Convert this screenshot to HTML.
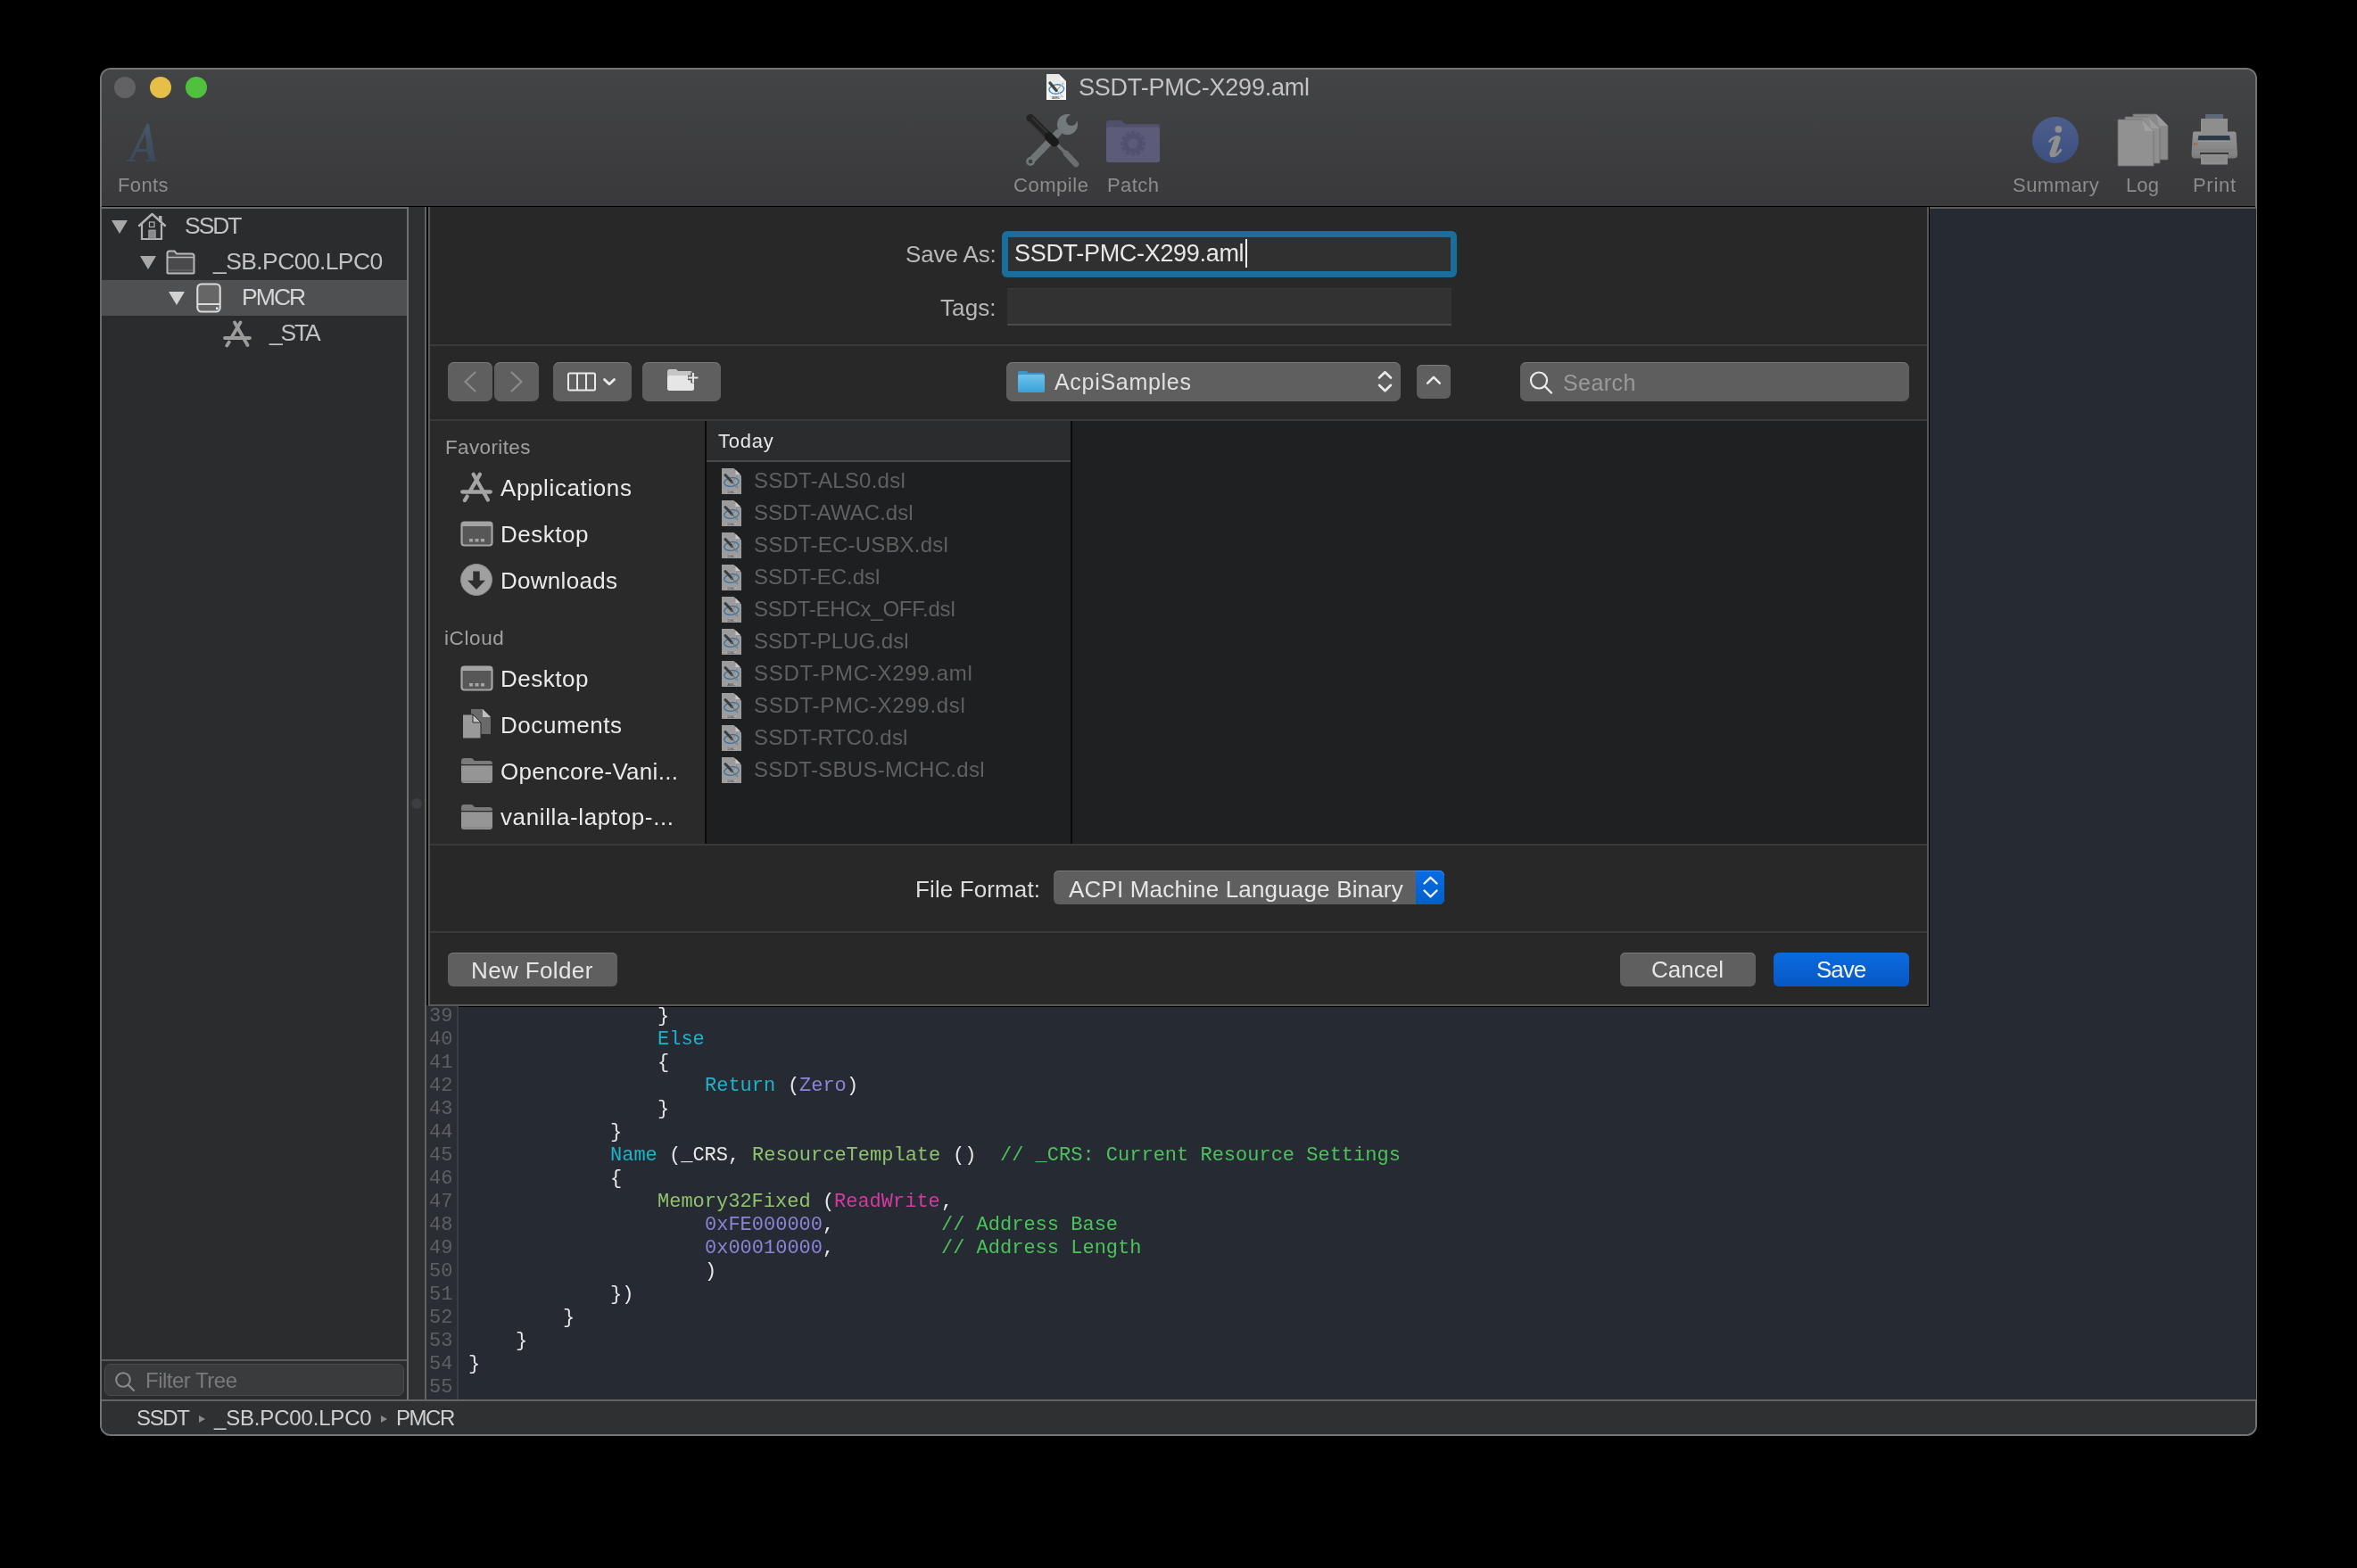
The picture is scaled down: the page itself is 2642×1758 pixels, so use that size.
<!DOCTYPE html>
<html><head><meta charset="utf-8">
<style>
*{margin:0;padding:0;box-sizing:border-box}
html,body{width:2642px;height:1758px;background:#000;overflow:hidden;font-family:"Liberation Sans",sans-serif}
.a{position:absolute}
.t{position:absolute;white-space:nowrap;line-height:1;will-change:transform}
.m{position:absolute;white-space:pre;line-height:1;will-change:transform;font-family:"Liberation Mono",monospace;font-size:22px;color:#e8e8e8}
svg{overflow:visible}
</style></head><body>
<div class="a" style="left:112px;top:76px;width:2418px;height:1534px;border:2px solid #747474;border-radius:12px;background:#2b2c2e;overflow:hidden"><div class="a" style="left:0;top:0;width:2416px;height:154px;background:linear-gradient(#434446,#39393b);border-bottom:1px solid #000"></div><div class="a" style="left:0;top:1491px;width:2416px;height:42px;background:#2f3032;border-top:2px solid #646464"></div></div>
<div class="a" style="left:113px;top:232px;width:343px;height:1337px;background:#2b2c2e;"></div>
<div class="a" style="left:456px;top:232px;width:2px;height:1337px;background:#6f6f6f;"></div>
<div class="a" style="left:458px;top:232px;width:18px;height:1337px;background:#2f3032;"></div>
<div class="a" style="left:461px;top:895px;width:12px;height:12px;border-radius:6px;background:#3d3e41"></div>
<div class="a" style="left:476px;top:232px;width:2053px;height:1337px;background:#262a33;"></div>
<div class="a" style="left:476px;top:232px;width:2px;height:1337px;background:#616264;"></div>
<div class="a" style="left:478px;top:232px;width:2051px;height:2px;background:#5c5c5c;"></div>
<div class="a" style="left:478px;top:232px;width:4px;height:895px;background:#0a0a0a;"></div>
<div class="a" style="left:480px;top:232px;width:2px;height:896px;background:#575757;"></div>
<div class="a" style="left:482px;top:232px;width:1678px;height:894px;background:#282828;"></div>
<div class="a" style="left:480px;top:1126px;width:1682px;height:2px;background:#575757;"></div>
<div class="a" style="left:2160px;top:232px;width:2px;height:896px;background:#575757;"></div>
<div class="a" style="left:2162px;top:232px;width:1px;height:897px;background:#000;"></div>
<div class="a" style="left:478px;top:1128px;width:1685px;height:1px;background:#000;"></div>
<div class="a" style="left:128px;top:86px;width:24px;height:24px;border-radius:12px;background:#626264"></div>
<div class="a" style="left:168px;top:86px;width:24px;height:24px;border-radius:12px;background:#e6bf48"></div>
<div class="a" style="left:208px;top:86px;width:24px;height:24px;border-radius:12px;background:#4fc13e"></div>
<div class="t" style="left:1209.00px;top:85.34px;font-size:27px;color:#c4c4c4;letter-spacing:-0.219px;">SSDT-PMC-X299.aml</div>
<div class="t" style="left:132.00px;top:197.08px;font-size:22px;color:#8c8c8c;letter-spacing:0.400px;">Fonts</div>
<div class="t" style="left:1136.00px;top:197.08px;font-size:22px;color:#8c8c8c;letter-spacing:0.542px;">Compile</div>
<div class="t" style="left:1241.00px;top:197.08px;font-size:22px;color:#8c8c8c;letter-spacing:0.438px;">Patch</div>
<div class="t" style="left:2256.00px;top:197.08px;font-size:22px;color:#8c8c8c;letter-spacing:0.458px;">Summary</div>
<div class="t" style="left:2383.00px;top:197.08px;font-size:22px;color:#8c8c8c;letter-spacing:0.125px;">Log</div>
<div class="t" style="left:2458.00px;top:197.08px;font-size:22px;color:#8c8c8c;letter-spacing:0.688px;">Print</div>
<div class="t" style="left:207.00px;top:240.17px;font-size:26.5px;color:#c2c2c2;letter-spacing:-2.050px;">SSDT</div>
<div class="t" style="left:238.50px;top:280.27px;font-size:26.5px;color:#c2c2c2;letter-spacing:-0.600px;">_SB.PC00.LPC0</div>
<div class="a" style="left:113px;top:314px;width:343px;height:40px;background:#4f5052;"></div>
<div class="t" style="left:270.80px;top:319.57px;font-size:26.5px;color:#d6d6d6;letter-spacing:-1.933px;">PMCR</div>
<div class="t" style="left:302.20px;top:359.77px;font-size:26.5px;color:#c2c2c2;letter-spacing:-2.233px;">_STA</div>
<div class="t" style="left:1015.00px;top:272.19px;font-size:26px;color:#b8b8b8;letter-spacing:-0.114px;">Save As:</div>
<div class="t" style="left:1054.00px;top:332.19px;font-size:26px;color:#b8b8b8;letter-spacing:0.113px;">Tags:</div>
<div class="a" style="left:1123px;top:259px;width:510px;height:52px;border-radius:6px;background:#1a6e9b"></div>
<div class="a" style="left:1130px;top:266px;width:496px;height:38px;background:#303030;"></div>
<div class="t" style="left:1136.80px;top:271.34px;font-size:27px;color:#e8e8e8;letter-spacing:-0.312px;">SSDT-PMC-X299.aml</div>
<div class="a" style="left:1396px;top:268px;width:2px;height:32px;background:#f0f0f0;"></div>
<div class="a" style="left:1129px;top:323px;width:498px;height:42px;background:#323232;border-bottom:2px solid #4a4a4a;border-top:1px solid #3a3a3a"></div>
<div class="a" style="left:482px;top:386px;width:1678px;height:2px;background:#3a3a3a;"></div>
<div class="a" style="left:482px;top:470px;width:1678px;height:2px;background:#3a3a3a;"></div>
<div class="a" style="left:502px;top:406px;width:50px;height:44px;background:#5f5f5f;border-radius:7px;box-shadow:inset 0 1px 0 #7a7a7a"></div>
<div class="a" style="left:554px;top:406px;width:50px;height:44px;background:#5f5f5f;border-radius:7px;box-shadow:inset 0 1px 0 #7a7a7a"></div>
<div class="a" style="left:620px;top:406px;width:88px;height:44px;background:#5f5f5f;border-radius:7px;box-shadow:inset 0 1px 0 #7a7a7a"></div>
<div class="a" style="left:720px;top:406px;width:88px;height:44px;background:#5f5f5f;border-radius:7px;box-shadow:inset 0 1px 0 #7a7a7a"></div>
<div class="a" style="left:1128px;top:406px;width:442px;height:44px;background:#5f5f5f;border-radius:7px;box-shadow:inset 0 1px 0 #7a7a7a"></div>
<div class="a" style="left:1588px;top:409px;width:38px;height:38px;background:#5f5f5f;border-radius:6px;box-shadow:inset 0 1px 0 #7a7a7a"></div>
<div class="t" style="left:1182.00px;top:416.04px;font-size:25px;color:#e0e0e0;letter-spacing:0.700px;">AcpiSamples</div>
<div class="a" style="left:1704px;top:406px;width:436px;height:44px;background:#5e5e5e;border-radius:7px;box-shadow:inset 0 1px 0 #787878"></div>
<div class="t" style="left:1751.60px;top:416.64px;font-size:25px;color:#9a9a9a;letter-spacing:0.430px;">Search</div>
<div class="a" style="left:482px;top:472px;width:308px;height:474px;background:#2a2a2a;"></div>
<div class="a" style="left:790px;top:472px;width:2px;height:474px;background:#0a0a0a;"></div>
<div class="a" style="left:792px;top:472px;width:408px;height:45px;background:#2b2c2e;"></div>
<div class="a" style="left:792px;top:516px;width:408px;height:2px;background:#4a4a4a;"></div>
<div class="a" style="left:792px;top:518px;width:408px;height:428px;background:#1e1f21;"></div>
<div class="a" style="left:1200px;top:472px;width:2px;height:474px;background:#0a0a0a;"></div>
<div class="a" style="left:1202px;top:472px;width:958px;height:474px;background:#1f2022;"></div>
<div class="t" style="left:499.00px;top:490.85px;font-size:22.5px;color:#a0a0a0;letter-spacing:0.363px;">Favorites</div>
<div class="t" style="left:498.40px;top:704.75px;font-size:22.5px;color:#a0a0a0;letter-spacing:0.610px;">iCloud</div>
<div class="t" style="left:561.00px;top:533.99px;font-size:26px;color:#eaeaea;letter-spacing:0.614px;">Applications</div>
<div class="t" style="left:561.00px;top:585.79px;font-size:26px;color:#eaeaea;letter-spacing:0.500px;">Desktop</div>
<div class="t" style="left:561.00px;top:637.99px;font-size:26px;color:#eaeaea;letter-spacing:0.281px;">Downloads</div>
<div class="t" style="left:561.00px;top:747.69px;font-size:26px;color:#eaeaea;letter-spacing:0.500px;">Desktop</div>
<div class="t" style="left:561.00px;top:799.89px;font-size:26px;color:#eaeaea;letter-spacing:0.562px;">Documents</div>
<div class="t" style="left:561.00px;top:851.59px;font-size:26px;color:#eaeaea;letter-spacing:0.283px;">Opencore-Vani...</div>
<div class="t" style="left:561.00px;top:903.19px;font-size:26px;color:#eaeaea;letter-spacing:0.618px;">vanilla-laptop-...</div>
<div class="t" style="left:805.00px;top:483.58px;font-size:22px;color:#e6e6e6;letter-spacing:0.762px;">Today</div>
<div class="t" style="left:845.00px;top:527.38px;font-size:24px;color:#606060;letter-spacing:0.254px;">SSDT-ALS0.dsl</div>
<div class="t" style="left:845.00px;top:563.38px;font-size:24px;color:#606060;letter-spacing:0.029px;">SSDT-AWAC.dsl</div>
<div class="t" style="left:845.00px;top:599.38px;font-size:24px;color:#606060;letter-spacing:0.203px;">SSDT-EC-USBX.dsl</div>
<div class="t" style="left:845.00px;top:635.38px;font-size:24px;color:#606060;letter-spacing:0.005px;">SSDT-EC.dsl</div>
<div class="t" style="left:845.00px;top:671.38px;font-size:24px;color:#606060;letter-spacing:-0.228px;">SSDT-EHCx_OFF.dsl</div>
<div class="t" style="left:845.00px;top:707.38px;font-size:24px;color:#606060;letter-spacing:0.008px;">SSDT-PLUG.dsl</div>
<div class="t" style="left:845.00px;top:743.38px;font-size:24px;color:#606060;letter-spacing:0.713px;">SSDT-PMC-X299.aml</div>
<div class="t" style="left:845.00px;top:779.38px;font-size:24px;color:#606060;letter-spacing:0.719px;">SSDT-PMC-X299.dsl</div>
<div class="t" style="left:845.00px;top:815.38px;font-size:24px;color:#606060;letter-spacing:0.179px;">SSDT-RTC0.dsl</div>
<div class="t" style="left:845.00px;top:851.38px;font-size:24px;color:#606060;letter-spacing:0.309px;">SSDT-SBUS-MCHC.dsl</div>
<div class="a" style="left:482px;top:946px;width:1678px;height:2px;background:#3a3a3a;"></div>
<div class="a" style="left:482px;top:1044px;width:1678px;height:2px;background:#3a3a3a;"></div>
<div class="t" style="left:1026.00px;top:984.19px;font-size:26px;color:#dcdcdc;letter-spacing:0.114px;">File Format:</div>
<div class="a" style="left:1181px;top:976px;width:438px;height:38px;background:#5f5f5f;border-radius:6px;box-shadow:inset 0 1px 0 #7a7a7a"></div>
<div class="a" style="left:1587px;top:976px;width:32px;height:38px;background:linear-gradient(#0a6ce6,#005fcb);border-radius:0 6px 6px 0;box-shadow:inset 0 1px 0 #3d8cf0"></div>
<div class="t" style="left:1198.00px;top:984.19px;font-size:26px;color:#e6e6e6;letter-spacing:0.174px;">ACPI Machine Language Binary</div>
<div class="a" style="left:502px;top:1068px;width:190px;height:38px;background:#5f5f5f;border-radius:6px;box-shadow:inset 0 1px 0 #7a7a7a"></div>
<div class="t" style="left:528.00px;top:1074.79px;font-size:26px;color:#e6e6e6;letter-spacing:0.378px;">New Folder</div>
<div class="a" style="left:1816px;top:1068px;width:152px;height:38px;background:#5f5f5f;border-radius:6px;box-shadow:inset 0 1px 0 #7a7a7a"></div>
<div class="t" style="left:1851.00px;top:1074.19px;font-size:26px;color:#e6e6e6;">Cancel</div>
<div class="a" style="left:1988px;top:1068px;width:152px;height:38px;background:linear-gradient(#0a6ae0,#0758c4);border-radius:6px"></div>
<div class="t" style="left:2035.70px;top:1074.19px;font-size:26px;color:#f2f2f2;letter-spacing:-1.050px;">Save</div>
<div class="a" style="left:478px;top:1128px;width:35px;height:441px;background:#2a2d33;"></div>
<div class="a" style="left:512px;top:1128px;width:2px;height:441px;background:#3a3d44;"></div>
<div class="m" style="left:481px;top:1128.74px;color:#5e6064">39</div>
<div class="m" style="left:736.98px;top:1128.74px;color:#e8e8e8">}</div>
<div class="m" style="left:481px;top:1154.74px;color:#5e6064">40</div>
<div class="m" style="left:736.98px;top:1154.74px;color:#1fb3c9">Else</div>
<div class="m" style="left:481px;top:1180.74px;color:#5e6064">41</div>
<div class="m" style="left:736.98px;top:1180.74px;color:#e8e8e8">{</div>
<div class="m" style="left:481px;top:1206.74px;color:#5e6064">42</div>
<div class="m" style="left:789.90px;top:1206.74px;color:#1fb3c9">Return</div>
<div class="m" style="left:882.51px;top:1206.74px;color:#e8e8e8">(</div>
<div class="m" style="left:895.74px;top:1206.74px;color:#8c84d6">Zero</div>
<div class="m" style="left:948.66px;top:1206.74px;color:#e8e8e8">)</div>
<div class="m" style="left:481px;top:1232.74px;color:#5e6064">43</div>
<div class="m" style="left:736.98px;top:1232.74px;color:#e8e8e8">}</div>
<div class="m" style="left:481px;top:1258.74px;color:#5e6064">44</div>
<div class="m" style="left:684.06px;top:1258.74px;color:#e8e8e8">}</div>
<div class="m" style="left:481px;top:1284.74px;color:#5e6064">45</div>
<div class="m" style="left:684.06px;top:1284.74px;color:#1fb3c9">Name</div>
<div class="m" style="left:750.21px;top:1284.74px;color:#e8e8e8">(_CRS,</div>
<div class="m" style="left:842.82px;top:1284.74px;color:#8ec46c">ResourceTemplate</div>
<div class="m" style="left:1067.73px;top:1284.74px;color:#e8e8e8">()</div>
<div class="m" style="left:1120.65px;top:1284.74px;color:#4cc35a">// _CRS: Current Resource Settings</div>
<div class="m" style="left:481px;top:1310.74px;color:#5e6064">46</div>
<div class="m" style="left:684.06px;top:1310.74px;color:#e8e8e8">{</div>
<div class="m" style="left:481px;top:1336.74px;color:#5e6064">47</div>
<div class="m" style="left:736.98px;top:1336.74px;color:#8ec46c">Memory32Fixed</div>
<div class="m" style="left:922.20px;top:1336.74px;color:#e8e8e8">(</div>
<div class="m" style="left:935.43px;top:1336.74px;color:#d23ba2">ReadWrite</div>
<div class="m" style="left:1054.50px;top:1336.74px;color:#e8e8e8">,</div>
<div class="m" style="left:481px;top:1362.74px;color:#5e6064">48</div>
<div class="m" style="left:789.90px;top:1362.74px;color:#8c84d6">0xFE000000</div>
<div class="m" style="left:922.20px;top:1362.74px;color:#e8e8e8">,</div>
<div class="m" style="left:1054.50px;top:1362.74px;color:#4cc35a">// Address Base</div>
<div class="m" style="left:481px;top:1388.74px;color:#5e6064">49</div>
<div class="m" style="left:789.90px;top:1388.74px;color:#8c84d6">0x00010000</div>
<div class="m" style="left:922.20px;top:1388.74px;color:#e8e8e8">,</div>
<div class="m" style="left:1054.50px;top:1388.74px;color:#4cc35a">// Address Length</div>
<div class="m" style="left:481px;top:1414.74px;color:#5e6064">50</div>
<div class="m" style="left:789.90px;top:1414.74px;color:#e8e8e8">)</div>
<div class="m" style="left:481px;top:1440.74px;color:#5e6064">51</div>
<div class="m" style="left:684.06px;top:1440.74px;color:#e8e8e8">})</div>
<div class="m" style="left:481px;top:1466.74px;color:#5e6064">52</div>
<div class="m" style="left:631.14px;top:1466.74px;color:#e8e8e8">}</div>
<div class="m" style="left:481px;top:1492.74px;color:#5e6064">53</div>
<div class="m" style="left:578.22px;top:1492.74px;color:#e8e8e8">}</div>
<div class="m" style="left:481px;top:1518.74px;color:#5e6064">54</div>
<div class="m" style="left:525.30px;top:1518.74px;color:#e8e8e8">}</div>
<div class="m" style="left:481px;top:1544.74px;color:#5e6064">55</div>
<div class="a" style="left:113px;top:1524px;width:343px;height:2px;background:#5a5a5a;"></div>
<div class="a" style="left:117px;top:1529px;width:336px;height:36px;background:#3a3b3d;border-radius:7px;border:1px solid #4a4b4d"></div>
<div class="t" style="left:163.00px;top:1535.88px;font-size:24px;color:#7a7a7a;letter-spacing:-0.500px;">Filter Tree</div>
<div class="t" style="left:153.00px;top:1577.88px;font-size:24px;color:#d0d0d0;letter-spacing:-1.367px;">SSDT</div>
<div class="t" style="left:239.70px;top:1577.88px;font-size:24px;color:#d0d0d0;letter-spacing:-0.171px;">_SB.PC00.LPC0</div>
<div class="t" style="left:443.90px;top:1577.88px;font-size:24px;color:#d0d0d0;letter-spacing:-1.483px;">PMCR</div>
<div class="a" style="left:112px;top:232px;width:2px;height:1337px;background:#6a6a6a;"></div>
<div class="a" style="left:114px;top:232px;width:342px;height:2px;background:#6a6a6a;"></div>
<svg class="a" style="left:140px;top:137px;" width="38" height="46" viewBox="0 0 38 46"><defs><linearGradient id="ag" x1="0" y1="0" x2="0" y2="1"><stop offset="0" stop-color="#475769"/><stop offset="1" stop-color="#3b4a5a"/></linearGradient></defs><path d="M2 44 H12 V42.5 L8.5 42 L13 33 H25 L27 42 L23.5 42.5 V44 H37 V42.5 L34 42 L27 2 H24.5 L5 42 L2 42.5 Z M14.5 30 L23 12.5 L24.6 30 Z" fill="url(#ag)"/></svg>
<svg class="a" style="left:1172px;top:82px;" width="24" height="31" viewBox="0 0 24 31"><defs><linearGradient id="tg" x1="0" y1="0" x2="0" y2="1"><stop offset="0" stop-color="#e6e6e6"/><stop offset="1" stop-color="#f8f8f8"/></linearGradient></defs>
<path d="M1 1 H15 L23 9 V30 H1 Z" fill="url(#tg)"/><path d="M16.5 3 L21.5 8 H16.5 Z" fill="#fff"/><path d="M15 1 L23 9" stroke="#999" stroke-width="0.8"/>
<ellipse cx="12" cy="26.5" rx="7" ry="1" fill="#d0d0d0"/>
<ellipse cx="12.3" cy="18" rx="8.3" ry="5.2" fill="none" stroke="#2f86c8" stroke-width="1.3" transform="rotate(-6 12.3 18)"/>
<path d="M12 19 L20 27" stroke="#aaa" stroke-width="0.9"/><path d="M12 20 L20 11" stroke="#b8b8b8" stroke-width="1.6"/>
<path d="M5 11 L12 19.5" stroke="#444" stroke-width="3.4" stroke-linecap="round"/>
<text x="11.5" y="29.3" font-size="4.2" text-anchor="middle" fill="#666" font-family="Liberation Sans" font-weight="bold">AML</text></svg>
<svg class="a" style="left:1140px;top:120px;" width="80" height="75" viewBox="0 0 80 75">
<path d="M15 61 L46 29" stroke="#6f7577" stroke-width="8" stroke-linecap="round"/>
<circle cx="15.1" cy="61" r="5" fill="#6f7577"/><circle cx="15.1" cy="61" r="2.3" fill="#3a3b3e"/>
<mask id="wm"><rect x="0" y="0" width="80" height="75" fill="#fff"/><circle cx="61" cy="15" r="6" fill="#000"/><path d="M61 15 L58 0 L80 0 L80 18 Z" fill="#000"/></mask>
<g mask="url(#wm)"><circle cx="56.5" cy="19.5" r="11.5" fill="#737a7d"/></g>
<path d="M40 37 L58 55" stroke="#6a6f71" stroke-width="3.6" stroke-linecap="butt"/>
<path d="M55 52 L66 64" stroke="#6a6f71" stroke-width="6.5" stroke-linecap="round"/>
<path d="M15 12.5 L40 37.5" stroke="#232323" stroke-width="9" stroke-linecap="round"/>
<path d="M17 12 L38 33" stroke="#3a3a3a" stroke-width="1.2"/><path d="M13 16 L34 37" stroke="#3a3a3a" stroke-width="1.2"/>
<path d="M36 33.5 L42 39.5" stroke="#1a1a1a" stroke-width="10" stroke-linecap="round"/>
</svg>
<svg class="a" style="left:1239px;top:134px;" width="62" height="49" viewBox="0 0 62 49">
<path d="M1 4 Q1 1 4 1 H18 L22 5 H58 Q61 5 61 8 V45 Q61 48 58 48 H4 Q1 48 1 45 Z" fill="#504f6c"/>
<path d="M1 11 Q1 8.5 4 8.5 H58 Q61 8.5 61 11 V45 Q61 48 58 48 H4 Q1 48 1 45 Z" fill="#5d5c78"/>
<g transform="translate(31,27)" fill="#525170">
<circle r="10.5"/>
<rect x="-2.2" y="-14" width="4.4" height="6" transform="rotate(0)"/><rect x="-2.2" y="-14" width="4.4" height="6" transform="rotate(30)"/><rect x="-2.2" y="-14" width="4.4" height="6" transform="rotate(60)"/><rect x="-2.2" y="-14" width="4.4" height="6" transform="rotate(90)"/>
<rect x="-2.2" y="-14" width="4.4" height="6" transform="rotate(120)"/><rect x="-2.2" y="-14" width="4.4" height="6" transform="rotate(150)"/><rect x="-2.2" y="-14" width="4.4" height="6" transform="rotate(180)"/><rect x="-2.2" y="-14" width="4.4" height="6" transform="rotate(210)"/>
<rect x="-2.2" y="-14" width="4.4" height="6" transform="rotate(240)"/><rect x="-2.2" y="-14" width="4.4" height="6" transform="rotate(270)"/><rect x="-2.2" y="-14" width="4.4" height="6" transform="rotate(300)"/><rect x="-2.2" y="-14" width="4.4" height="6" transform="rotate(330)"/>
<circle r="5.6" fill="#5d5c78"/>
</g>
<path d="M2 41 H60 M2 43.5 H60" stroke="#5a5879" stroke-width="1"/>
</svg>
<svg class="a" style="left:2276px;top:130px;" width="56" height="56" viewBox="0 0 56 56"><defs><linearGradient id="sg" x1="0" y1="0" x2="0" y2="1"><stop offset="0" stop-color="#4b5e8b"/><stop offset="1" stop-color="#3d4f80"/></linearGradient></defs>
<circle cx="28" cy="27" r="26" fill="url(#sg)"/>
<circle cx="31.3" cy="14.9" r="3.9" fill="#8e8e8e"/>
<path d="M21.5 28.5 Q26 23 30.5 23.5" fill="none" stroke="#8e8e8e" stroke-width="2.6" stroke-linecap="round"/>
<path d="M30.3 25.5 L24.8 42" stroke="#8e8e8e" stroke-width="6.8" stroke-linecap="round"/>
<path d="M23.5 45 Q29 45.5 33.8 38.2" fill="none" stroke="#8e8e8e" stroke-width="2.6" stroke-linecap="round"/></svg>
<svg class="a" style="left:2373px;top:127px;" width="60" height="61" viewBox="0 0 60 61">
<path d="M18 1 H44 L57 14 V52 H18 Z" fill="#8a8a8a" stroke="#6e6e6e" stroke-width="0.8"/><path d="M44 1 L57 14 H47 Q46 8 44 1 Z" fill="#9a9a9a"/>
<path d="M9 4 H35 L48 17 V56 H9 Z" fill="#8f8f8f" stroke="#6e6e6e" stroke-width="0.8"/><path d="M35 4 L48 17 H38 Q37 11 35 4 Z" fill="#9c9c9c"/>
<path d="M1 7 H28 L41 20 V59 H1 Z" fill="#919191" stroke="#6e6e6e" stroke-width="0.8"/><path d="M28 7 L41 20 H31 Q30 14 28 7 Z" fill="#a0a0a0"/>
</svg>
<svg class="a" style="left:2455px;top:127px;" width="55" height="61" viewBox="0 0 55 61"><defs><linearGradient id="pb" x1="0" y1="0" x2="0" y2="1"><stop offset="0" stop-color="#929292"/><stop offset="0.75" stop-color="#858585"/><stop offset="1" stop-color="#7a7a7a"/></linearGradient></defs>
<rect x="17" y="1" width="20" height="6" fill="#5e6878"/>
<rect x="12" y="6" width="30" height="19" fill="#8e8e8e"/>
<path d="M4.5 20.5 H12 V24 H42 V20.5 H49.5 Q51 20.5 51.5 22 L53 46 Q53 50.5 49 50.5 H5 Q1.5 50.5 1.5 46 L3 22 Q3.5 20.5 4.5 20.5 Z" fill="url(#pb)"/>
<path d="M9.5 25 H44 L45 30.5 H8.5 Z" fill="#2e3846"/><path d="M8.5 30.5 H45 V32 H8.5 Z" fill="#9a9a9a"/>
<rect x="4" y="33.5" width="2" height="2" fill="#b0553a"/><rect x="6.5" y="33.5" width="2" height="2" fill="#a07040"/>
<path d="M2 41 H52" stroke="#7c7c7c" stroke-width="0.8"/>
<rect x="11" y="44" width="32" height="2.5" fill="#3a3a3a"/>
<rect x="12" y="46" width="30" height="11.5" fill="#8e8e8e"/>
<path d="M15 50 H39 M15 53 H39" stroke="#808080" stroke-width="0.6"/>
</svg>
<svg class="a" style="left:125px;top:247px;" width="18" height="15" viewBox="0 0 18 15"><path d="M0 0 H18 L9.0 15 Z" fill="#a8a8a8"/></svg>
<svg class="a" style="left:157px;top:287px;" width="18" height="15" viewBox="0 0 18 15"><path d="M0 0 H18 L9.0 15 Z" fill="#a8a8a8"/></svg>
<svg class="a" style="left:189px;top:327px;" width="18" height="15" viewBox="0 0 18 15"><path d="M0 0 H18 L9.0 15 Z" fill="#d2d2d2"/></svg>
<svg class="a" style="left:153px;top:238px;" width="35" height="32" viewBox="0 0 35 32"><path d="M3 15 L17.5 2 L32 15" fill="none" stroke="#b2b2b2" stroke-width="2.4" stroke-linecap="round" stroke-linejoin="round"/>
<path d="M6 13 V30 H28 V13" fill="none" stroke="#b2b2b2" stroke-width="2.2"/><rect x="25" y="4" width="3.5" height="7" fill="#b2b2b2"/>
<rect x="14.5" y="11" width="5.5" height="5.5" fill="none" stroke="#b2b2b2" stroke-width="1.2"/><rect x="13.8" y="20" width="7.4" height="10" fill="#8a8a8a" stroke="#b2b2b2" stroke-width="0.8"/></svg>
<svg class="a" style="left:186px;top:280px;" width="33" height="28" viewBox="0 0 33 28"><path d="M1.5 26 V4 Q1.5 1.5 4 1.5 H9.5 L12 4.5 H29 Q31.5 4.5 31.5 7 V26 Q31.5 26.5 29 26.5 H4 Q1.5 26.5 1.5 26 Z" fill="#4a4a4c" stroke="#b8b8b8" stroke-width="2"/>
<path d="M2 8.5 H31" stroke="#b8b8b8" stroke-width="1.5"/><path d="M3 23 H30" stroke="#5a5a5c" stroke-width="2"/></svg>
<svg class="a" style="left:219px;top:317px;" width="30" height="34" viewBox="0 0 30 34"><rect x="2.3" y="1.5" width="25.4" height="31" rx="4.5" fill="#666" stroke="#dadada" stroke-width="2.1"/>
<path d="M3 24 H27" stroke="#dadada" stroke-width="2"/><rect x="23" y="27.5" width="2.5" height="2.5" fill="#eee"/></svg>
<svg class="a" style="left:250px;top:359px;" width="32" height="28.80000000000001" viewBox="0 0 32 28.80000000000001"><g transform="scale(1.0000)" stroke="#9c9c9c" stroke-linecap="round" fill="none">
<path d="M19.5 2.5 L9.5 19.5" stroke-width="3.8"/><path d="M13 2.5 L27.5 28" stroke-width="3.8"/><path d="M2 20 H30" stroke-width="3.8"/><path d="M6.8 24.5 L4.3 28.5" stroke-width="3.8"/></g></svg>
<svg class="a" style="left:518px;top:418px;" width="18" height="20" viewBox="0 0 18 20"><path d="M14.5 -0.5 L3.5 10 L14.5 20.5" fill="none" stroke="#8a8a8a" stroke-width="2.4" stroke-linecap="round" stroke-linejoin="round"/></svg>
<svg class="a" style="left:570px;top:418px;" width="18" height="20" viewBox="0 0 18 20"><path d="M3.5 -0.5 L14.5 10 L3.5 20.5" fill="none" stroke="#8a8a8a" stroke-width="2.4" stroke-linecap="round" stroke-linejoin="round"/></svg>
<svg class="a" style="left:635px;top:417px;" width="57" height="23" viewBox="0 0 57 23"><rect x="2" y="1.6" width="30" height="18.8" rx="1.5" fill="none" stroke="#eaeaea" stroke-width="2"/><path d="M12 2 V20 M22 2 V20" stroke="#eaeaea" stroke-width="2"/>
<path d="M42.5 8.5 L48 13.8 L53.5 8.5" fill="none" stroke="#eaeaea" stroke-width="2.8" stroke-linecap="round" stroke-linejoin="round"/></svg>
<svg class="a" style="left:746px;top:413px;" width="40" height="27" viewBox="0 0 40 27"><path d="M2 4 Q2 1 4.5 1 H12 L14 3 H28 Q30 3 30 5 V9 H2 Z" fill="#c6c6c6"/>
<path d="M2 10 Q2 8 4 8 H30 Q32 8 32 10 V22.5 Q32 25 29.5 25 H4.5 Q2 25 2 22.5 Z" fill="#e6e6e6"/>
<path d="M31 4.5 V16.5 M25 10.5 H37" stroke="#5f5f5f" stroke-width="5.5"/><path d="M31 5 V16 M25.5 10.5 H36.5" stroke="#e6e6e6" stroke-width="2"/></svg>
<svg class="a" style="left:1140px;top:415px;" width="32" height="26" viewBox="0 0 32 26"><defs><linearGradient id="fb" x1="0" y1="0" x2="0" y2="1"><stop offset="0" stop-color="#6cc4ec"/><stop offset="1" stop-color="#3aa2d8"/></linearGradient></defs>
<path d="M1 3 Q1 1 3 1 H11 L13 3 H29 Q31 3 31 5 V8 H1 Z" fill="#3e92c4"/><path d="M1 6.5 Q1 5 3 5 H29 Q31 5 31 7 V23.5 Q31 25 29 25 H3 Q1 25 1 23.5 Z" fill="url(#fb)"/></svg>
<svg class="a" style="left:1541px;top:414px;" width="23" height="28" viewBox="0 0 23 28"><path d="M5 9.5 L11.5 3.3 L18 9.5 M5 17.8 L11.5 24.2 L18 17.8" fill="none" stroke="#ececec" stroke-width="2.6" stroke-linecap="round" stroke-linejoin="round"/></svg>
<svg class="a" style="left:1597px;top:420px;" width="20" height="14" viewBox="0 0 20 14"><path d="M3.2 9.6 L10 2.9 L16.8 9.6" fill="none" stroke="#ececec" stroke-width="2.6" stroke-linecap="round" stroke-linejoin="round"/></svg>
<svg class="a" style="left:1713px;top:415px;" width="29" height="29" viewBox="0 0 29 29"><circle cx="12" cy="11.5" r="9" fill="none" stroke="#eaeaea" stroke-width="2.2"/><path d="M18.5 18 L26 25.5" stroke="#eaeaea" stroke-width="2.4" stroke-linecap="round"/></svg>
<svg class="a" style="left:1592px;top:980px;" width="22" height="30" viewBox="0 0 22 30"><path d="M4.5 10.5 L11.5 3.8 L18.5 10.5 M4.5 18.5 L11.5 25.3 L18.5 18.5" fill="none" stroke="#eef2fa" stroke-width="2.4" stroke-linecap="round" stroke-linejoin="round"/></svg>
<svg class="a" style="left:516px;top:529px;" width="36" height="32.39999999999998" viewBox="0 0 36 32.39999999999998"><g transform="scale(1.1250)" stroke="#a4a4a4" stroke-linecap="round" fill="none">
<path d="M19.5 2.5 L9.5 19.5" stroke-width="3.8"/><path d="M13 2.5 L27.5 28" stroke-width="3.8"/><path d="M2 20 H30" stroke-width="3.8"/><path d="M6.8 24.5 L4.3 28.5" stroke-width="3.8"/></g></svg>
<svg class="a" style="left:516px;top:584px;" width="37" height="29" viewBox="0 0 37 29"><rect x="1.5" y="1.5" width="34" height="26" rx="3" fill="#575757" stroke="#a4a4a4" stroke-width="2.2"/><rect x="2" y="2" width="33" height="4" fill="#a4a4a4"/>
<rect x="10" y="20" width="4" height="3.5" fill="#a4a4a4"/><rect x="16.5" y="20" width="4" height="3.5" fill="#a4a4a4"/><rect x="23" y="20" width="4" height="3.5" fill="#a4a4a4"/></svg>
<svg class="a" style="left:516px;top:746px;" width="37" height="29" viewBox="0 0 37 29"><rect x="1.5" y="1.5" width="34" height="26" rx="3" fill="#575757" stroke="#a4a4a4" stroke-width="2.2"/><rect x="2" y="2" width="33" height="4" fill="#a4a4a4"/>
<rect x="10" y="20" width="4" height="3.5" fill="#a4a4a4"/><rect x="16.5" y="20" width="4" height="3.5" fill="#a4a4a4"/><rect x="23" y="20" width="4" height="3.5" fill="#a4a4a4"/></svg>
<svg class="a" style="left:516px;top:632px;" width="37" height="37" viewBox="0 0 37 37"><circle cx="18" cy="18" r="17.5" fill="#a0a0a0" stroke="#8a8a8a" stroke-width="1"/><path d="M14.3 8.4 H21.7 V18.8 H28 L18 29 L8 18.8 H14.3 Z" fill="#2e2e2e"/></svg>
<svg class="a" style="left:517px;top:794px;" width="35" height="36" viewBox="0 0 35 36"><path d="M11 1 H24 L33 10 V29 H11 Z" fill="#6a6a6a"/><path d="M24 1 L33 10 H24 Z" fill="#c0c0c0"/>
<path d="M1.5 7 H13 L22 16 V34 H1.5 Z" fill="#9a9a9a" stroke="#2a2a2a" stroke-width="1"/><path d="M13 7 L22 16 H13 Z" fill="#c4c4c4" stroke="#2a2a2a" stroke-width="1"/></svg>
<svg class="a" style="left:516px;top:849px;" width="37" height="30" viewBox="0 0 37 30"><path d="M1 5 Q1 1 4 1 H12 Q14 1 15 3 L16 4 H33 Q36 4 36 7 V10 H1 Z" fill="#7a7a7a"/>
<path d="M1 10 Q1 7 4 7 H33 Q36 7 36 10 V26 Q36 29 33 29 H4 Q1 29 1 26 Z" fill="#959595"/><path d="M1 8.5 H36" stroke="#2a2a2a" stroke-width="1.6"/><path d="M2 27 H35" stroke="#868686" stroke-width="1.5"/></svg>
<svg class="a" style="left:516px;top:901px;" width="37" height="30" viewBox="0 0 37 30"><path d="M1 5 Q1 1 4 1 H12 Q14 1 15 3 L16 4 H33 Q36 4 36 7 V10 H1 Z" fill="#7a7a7a"/>
<path d="M1 10 Q1 7 4 7 H33 Q36 7 36 10 V26 Q36 29 33 29 H4 Q1 29 1 26 Z" fill="#959595"/><path d="M1 8.5 H36" stroke="#2a2a2a" stroke-width="1.6"/><path d="M2 27 H35" stroke="#868686" stroke-width="1.5"/></svg>
<svg class="a" style="left:809px;top:525px;" width="23" height="30" viewBox="0 0 23 30"><path d="M0 0 H13.5 L22 8.5 V29 H0 Z" fill="#9c9c9c"/><path d="M15.5 1.5 L21 7 H15.5 Z" fill="#c8c8c8"/>
<ellipse cx="11" cy="26" rx="7" ry="1.2" fill="#b0b0b0" opacity="0.6"/>
<ellipse cx="11" cy="15.5" rx="8.2" ry="4.8" fill="none" stroke="#2f70a4" stroke-width="1.2" transform="rotate(-8 11 15.5)"/>
<path d="M11.5 15.5 L18 22" stroke="#777" stroke-width="1.2"/><path d="M4 7.5 L11.5 15.5" stroke="#3c3c3c" stroke-width="3" stroke-linecap="round"/><path d="M11 16 L17.5 9" stroke="#808080" stroke-width="1"/>
<text x="10.5" y="27.8" font-size="4.2" text-anchor="middle" fill="#3a3a3a" font-family="Liberation Sans">DSL</text></svg>
<svg class="a" style="left:809px;top:561px;" width="23" height="30" viewBox="0 0 23 30"><path d="M0 0 H13.5 L22 8.5 V29 H0 Z" fill="#9c9c9c"/><path d="M15.5 1.5 L21 7 H15.5 Z" fill="#c8c8c8"/>
<ellipse cx="11" cy="26" rx="7" ry="1.2" fill="#b0b0b0" opacity="0.6"/>
<ellipse cx="11" cy="15.5" rx="8.2" ry="4.8" fill="none" stroke="#2f70a4" stroke-width="1.2" transform="rotate(-8 11 15.5)"/>
<path d="M11.5 15.5 L18 22" stroke="#777" stroke-width="1.2"/><path d="M4 7.5 L11.5 15.5" stroke="#3c3c3c" stroke-width="3" stroke-linecap="round"/><path d="M11 16 L17.5 9" stroke="#808080" stroke-width="1"/>
<text x="10.5" y="27.8" font-size="4.2" text-anchor="middle" fill="#3a3a3a" font-family="Liberation Sans">DSL</text></svg>
<svg class="a" style="left:809px;top:597px;" width="23" height="30" viewBox="0 0 23 30"><path d="M0 0 H13.5 L22 8.5 V29 H0 Z" fill="#9c9c9c"/><path d="M15.5 1.5 L21 7 H15.5 Z" fill="#c8c8c8"/>
<ellipse cx="11" cy="26" rx="7" ry="1.2" fill="#b0b0b0" opacity="0.6"/>
<ellipse cx="11" cy="15.5" rx="8.2" ry="4.8" fill="none" stroke="#2f70a4" stroke-width="1.2" transform="rotate(-8 11 15.5)"/>
<path d="M11.5 15.5 L18 22" stroke="#777" stroke-width="1.2"/><path d="M4 7.5 L11.5 15.5" stroke="#3c3c3c" stroke-width="3" stroke-linecap="round"/><path d="M11 16 L17.5 9" stroke="#808080" stroke-width="1"/>
<text x="10.5" y="27.8" font-size="4.2" text-anchor="middle" fill="#3a3a3a" font-family="Liberation Sans">DSL</text></svg>
<svg class="a" style="left:809px;top:633px;" width="23" height="30" viewBox="0 0 23 30"><path d="M0 0 H13.5 L22 8.5 V29 H0 Z" fill="#9c9c9c"/><path d="M15.5 1.5 L21 7 H15.5 Z" fill="#c8c8c8"/>
<ellipse cx="11" cy="26" rx="7" ry="1.2" fill="#b0b0b0" opacity="0.6"/>
<ellipse cx="11" cy="15.5" rx="8.2" ry="4.8" fill="none" stroke="#2f70a4" stroke-width="1.2" transform="rotate(-8 11 15.5)"/>
<path d="M11.5 15.5 L18 22" stroke="#777" stroke-width="1.2"/><path d="M4 7.5 L11.5 15.5" stroke="#3c3c3c" stroke-width="3" stroke-linecap="round"/><path d="M11 16 L17.5 9" stroke="#808080" stroke-width="1"/>
<text x="10.5" y="27.8" font-size="4.2" text-anchor="middle" fill="#3a3a3a" font-family="Liberation Sans">DSL</text></svg>
<svg class="a" style="left:809px;top:669px;" width="23" height="30" viewBox="0 0 23 30"><path d="M0 0 H13.5 L22 8.5 V29 H0 Z" fill="#9c9c9c"/><path d="M15.5 1.5 L21 7 H15.5 Z" fill="#c8c8c8"/>
<ellipse cx="11" cy="26" rx="7" ry="1.2" fill="#b0b0b0" opacity="0.6"/>
<ellipse cx="11" cy="15.5" rx="8.2" ry="4.8" fill="none" stroke="#2f70a4" stroke-width="1.2" transform="rotate(-8 11 15.5)"/>
<path d="M11.5 15.5 L18 22" stroke="#777" stroke-width="1.2"/><path d="M4 7.5 L11.5 15.5" stroke="#3c3c3c" stroke-width="3" stroke-linecap="round"/><path d="M11 16 L17.5 9" stroke="#808080" stroke-width="1"/>
<text x="10.5" y="27.8" font-size="4.2" text-anchor="middle" fill="#3a3a3a" font-family="Liberation Sans">DSL</text></svg>
<svg class="a" style="left:809px;top:705px;" width="23" height="30" viewBox="0 0 23 30"><path d="M0 0 H13.5 L22 8.5 V29 H0 Z" fill="#9c9c9c"/><path d="M15.5 1.5 L21 7 H15.5 Z" fill="#c8c8c8"/>
<ellipse cx="11" cy="26" rx="7" ry="1.2" fill="#b0b0b0" opacity="0.6"/>
<ellipse cx="11" cy="15.5" rx="8.2" ry="4.8" fill="none" stroke="#2f70a4" stroke-width="1.2" transform="rotate(-8 11 15.5)"/>
<path d="M11.5 15.5 L18 22" stroke="#777" stroke-width="1.2"/><path d="M4 7.5 L11.5 15.5" stroke="#3c3c3c" stroke-width="3" stroke-linecap="round"/><path d="M11 16 L17.5 9" stroke="#808080" stroke-width="1"/>
<text x="10.5" y="27.8" font-size="4.2" text-anchor="middle" fill="#3a3a3a" font-family="Liberation Sans">DSL</text></svg>
<svg class="a" style="left:809px;top:741px;" width="23" height="30" viewBox="0 0 23 30"><path d="M0 0 H13.5 L22 8.5 V29 H0 Z" fill="#9c9c9c"/><path d="M15.5 1.5 L21 7 H15.5 Z" fill="#c8c8c8"/>
<ellipse cx="11" cy="26" rx="7" ry="1.2" fill="#b0b0b0" opacity="0.6"/>
<ellipse cx="11" cy="15.5" rx="8.2" ry="4.8" fill="none" stroke="#2f70a4" stroke-width="1.2" transform="rotate(-8 11 15.5)"/>
<path d="M11.5 15.5 L18 22" stroke="#777" stroke-width="1.2"/><path d="M4 7.5 L11.5 15.5" stroke="#3c3c3c" stroke-width="3" stroke-linecap="round"/><path d="M11 16 L17.5 9" stroke="#808080" stroke-width="1"/>
<text x="10.5" y="27.8" font-size="4.2" text-anchor="middle" fill="#3a3a3a" font-family="Liberation Sans">AML</text></svg>
<svg class="a" style="left:809px;top:777px;" width="23" height="30" viewBox="0 0 23 30"><path d="M0 0 H13.5 L22 8.5 V29 H0 Z" fill="#9c9c9c"/><path d="M15.5 1.5 L21 7 H15.5 Z" fill="#c8c8c8"/>
<ellipse cx="11" cy="26" rx="7" ry="1.2" fill="#b0b0b0" opacity="0.6"/>
<ellipse cx="11" cy="15.5" rx="8.2" ry="4.8" fill="none" stroke="#2f70a4" stroke-width="1.2" transform="rotate(-8 11 15.5)"/>
<path d="M11.5 15.5 L18 22" stroke="#777" stroke-width="1.2"/><path d="M4 7.5 L11.5 15.5" stroke="#3c3c3c" stroke-width="3" stroke-linecap="round"/><path d="M11 16 L17.5 9" stroke="#808080" stroke-width="1"/>
<text x="10.5" y="27.8" font-size="4.2" text-anchor="middle" fill="#3a3a3a" font-family="Liberation Sans">DSL</text></svg>
<svg class="a" style="left:809px;top:813px;" width="23" height="30" viewBox="0 0 23 30"><path d="M0 0 H13.5 L22 8.5 V29 H0 Z" fill="#9c9c9c"/><path d="M15.5 1.5 L21 7 H15.5 Z" fill="#c8c8c8"/>
<ellipse cx="11" cy="26" rx="7" ry="1.2" fill="#b0b0b0" opacity="0.6"/>
<ellipse cx="11" cy="15.5" rx="8.2" ry="4.8" fill="none" stroke="#2f70a4" stroke-width="1.2" transform="rotate(-8 11 15.5)"/>
<path d="M11.5 15.5 L18 22" stroke="#777" stroke-width="1.2"/><path d="M4 7.5 L11.5 15.5" stroke="#3c3c3c" stroke-width="3" stroke-linecap="round"/><path d="M11 16 L17.5 9" stroke="#808080" stroke-width="1"/>
<text x="10.5" y="27.8" font-size="4.2" text-anchor="middle" fill="#3a3a3a" font-family="Liberation Sans">DSL</text></svg>
<svg class="a" style="left:809px;top:849px;" width="23" height="30" viewBox="0 0 23 30"><path d="M0 0 H13.5 L22 8.5 V29 H0 Z" fill="#9c9c9c"/><path d="M15.5 1.5 L21 7 H15.5 Z" fill="#c8c8c8"/>
<ellipse cx="11" cy="26" rx="7" ry="1.2" fill="#b0b0b0" opacity="0.6"/>
<ellipse cx="11" cy="15.5" rx="8.2" ry="4.8" fill="none" stroke="#2f70a4" stroke-width="1.2" transform="rotate(-8 11 15.5)"/>
<path d="M11.5 15.5 L18 22" stroke="#777" stroke-width="1.2"/><path d="M4 7.5 L11.5 15.5" stroke="#3c3c3c" stroke-width="3" stroke-linecap="round"/><path d="M11 16 L17.5 9" stroke="#808080" stroke-width="1"/>
<text x="10.5" y="27.8" font-size="4.2" text-anchor="middle" fill="#3a3a3a" font-family="Liberation Sans">DSL</text></svg>
<svg class="a" style="left:128px;top:1537px;" width="24" height="24" viewBox="0 0 24 24"><circle cx="10" cy="10" r="7.8" fill="none" stroke="#8a8a8a" stroke-width="2"/><path d="M15.6 15.6 L22 22" stroke="#8a8a8a" stroke-width="2.2" stroke-linecap="round"/></svg>
<svg class="a" style="left:222px;top:1586px;" width="10" height="10" viewBox="0 0 10 10"><path d="M1 1 L8 5 L1 9 Z" fill="#8a8a8a"/></svg>
<svg class="a" style="left:426px;top:1586px;" width="10" height="10" viewBox="0 0 10 10"><path d="M1 1 L8 5 L1 9 Z" fill="#8a8a8a"/></svg>
</body></html>
